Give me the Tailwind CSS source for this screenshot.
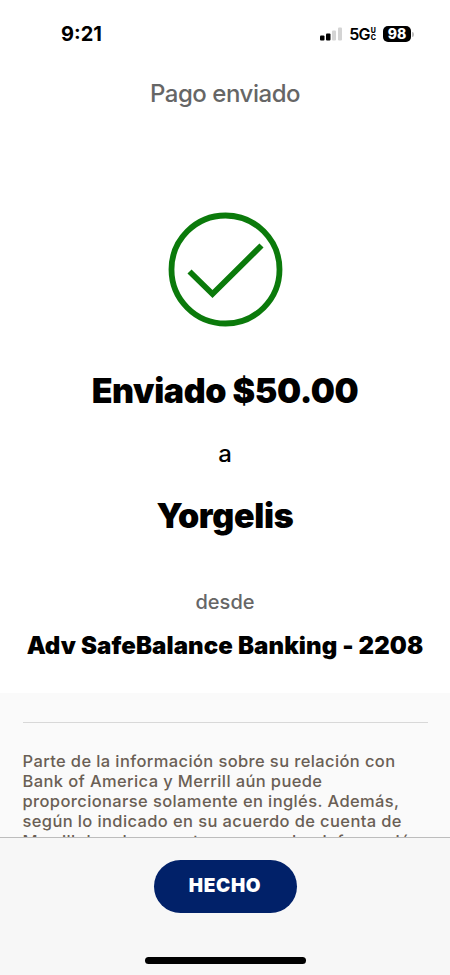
<!DOCTYPE html>
<html lang="es">
<head>
  <meta charset="UTF-8" />
  <meta name="viewport" content="width=device-width, initial-scale=1.0"/>
  <title>Pago enviado</title>
  <script src="https://cdn.jsdelivr.net/npm/@tailwindcss/browser@4"></script>
</head>
<body class="bg-white h-screen overflow-hidden flex flex-col font-['Inter','Liberation_Sans',sans-serif] text-black">

  <!-- Barra de estado -->
  <header class="h-[68px] shrink-0 flex items-center justify-between pl-[61px] pr-9">
    <span class="text-[20px] leading-6 font-bold">9:21</span>
    <div class="flex items-center">
      <svg class="w-[23px] h-[14px]" viewBox="0 0 23 14">
        <rect x="1" y="8.500" width="4.500" height="5" rx="1" />
        <rect x="7" y="6.500" width="4.500" height="7" rx="1" />
        <rect x="13" y="3.500" width="4" height="10" rx="1" fill="#d4d4d4" />
        <rect x="19" y="0.500" width="4" height="13" rx="1" fill="#d4d4d4" />
      </svg>
      <span class="ml-[7px] text-[16px] leading-4 font-semibold tracking-[-0.8px]">5G</span>
      <span class="ml-px flex flex-col text-[7px] leading-[7px] font-extrabold"><span>U</span><span>C</span></span>
      <span class="ml-[7px] w-7 h-4 rounded-[5px] bg-black text-white text-[14px] leading-4 font-extrabold text-center">98</span>
      <span class="ml-px w-[2px] h-[5px] rounded-r-full bg-[#bdbdbd]"></span>
    </div>
  </header>

  <h1 class="mt-[9px] shrink-0 text-center text-[24px] leading-[34px] font-medium tracking-[-0.45px] text-[#666]">Pago enviado</h1>

  <main class="flex-1 min-h-0 overflow-hidden flex flex-col items-center">
    <svg class="mt-[101px] w-[115px] h-[115px] shrink-0" viewBox="0 0 115 115" fill="none" stroke="#0b7a0b" stroke-width="5.800">
      <circle cx="57.500" cy="57.500" r="54" />
      <path d="M21.500 59.500 44.500 82 93.500 33.500" />
    </svg>

    <p class="mt-[44px] text-[34px] leading-10 font-black tracking-[-0.4px] whitespace-nowrap">Enviado $50.00</p>
    <p class="mt-[27px] text-[24px] leading-8 font-medium">a</p>
    <p class="mt-[26px] text-[34px] leading-10 font-black tracking-[-0.3px] whitespace-nowrap">Yorgelis</p>
    <p class="mt-[52px] text-[20px] leading-7 font-medium text-[#666]">desde</p>
    <p class="mt-[14px] text-[24px] leading-8 font-black tracking-[0.1px] whitespace-nowrap">Adv SafeBalance Banking - 2208</p>

    <section class="mt-[31px] w-full flex-1 min-h-0 overflow-hidden bg-[#fafafa] px-[22.500px] pt-[29px]">
      <hr class="border-[#d8d8d8]" />
      <p class="mt-7 text-[16.500px] leading-[20.100px] font-medium tracking-[0.380px] text-[#6a5f55] whitespace-nowrap">
        Parte de la información sobre su relación con<br>
        Bank of America y Merrill aún puede<br>
        proporcionarse solamente en inglés. Además,<br>
        según lo indicado en su acuerdo de cuenta de<br>
        <span class="[word-spacing:1px]">Merrill, los documentos que se dan información</span>
      </p>
    </section>
  </main>

  <footer class="h-[138px] shrink-0 flex flex-col items-center bg-[#f7f7f7] border-t border-[#bdbdbd] pt-[22px]">
    <button class="w-[143px] h-[53px] rounded-full bg-[#012169] text-white text-[19px] font-black tracking-[0.7px]">HECHO</button>
    <div class="mt-[43.500px] w-[161px] h-[7px] rounded-full bg-black"></div>
  </footer>

</body>
</html>
